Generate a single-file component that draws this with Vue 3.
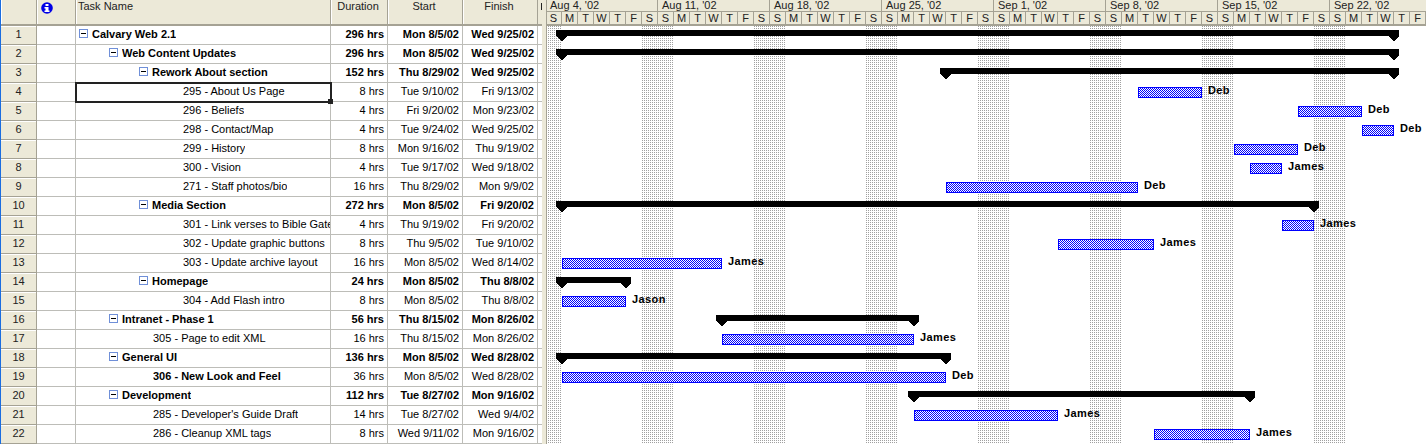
<script setup>
const tasks = [
  { id: 1, name: 'Calvary Web 2.1', level: 0, group: true, dur: '296 hrs', start: 'Mon 8/5/02', finish: 'Wed 9/25/02', from: 562, to: 1394 },
  { id: 2, name: 'Web Content Updates', level: 1, group: true, dur: '296 hrs', start: 'Mon 8/5/02', finish: 'Wed 9/25/02', from: 562, to: 1394 },
  { id: 3, name: 'Rework About section', level: 2, group: true, dur: '152 hrs', start: 'Thu 8/29/02', finish: 'Wed 9/25/02', from: 946, to: 1394 },
  { id: 4, name: '295 - About Us Page', level: 3, dur: '8 hrs', start: 'Tue 9/10/02', finish: 'Fri 9/13/02', from: 1138, to: 1202, who: 'Deb', selected: true },
  { id: 5, name: '296 - Beliefs', level: 3, dur: '4 hrs', start: 'Fri 9/20/02', finish: 'Mon 9/23/02', from: 1298, to: 1362, who: 'Deb' },
  { id: 6, name: '298 - Contact/Map', level: 3, dur: '4 hrs', start: 'Tue 9/24/02', finish: 'Wed 9/25/02', from: 1362, to: 1394, who: 'Deb' },
  { id: 7, name: '299 - History', level: 3, dur: '8 hrs', start: 'Mon 9/16/02', finish: 'Thu 9/19/02', from: 1234, to: 1298, who: 'Deb' },
  { id: 8, name: '300 - Vision', level: 3, dur: '4 hrs', start: 'Tue 9/17/02', finish: 'Wed 9/18/02', from: 1250, to: 1282, who: 'James' },
  { id: 9, name: '271 - Staff photos/bio', level: 3, dur: '16 hrs', start: 'Thu 8/29/02', finish: 'Mon 9/9/02', from: 946, to: 1138, who: 'Deb' },
  { id: 10, name: 'Media Section', level: 2, group: true, dur: '272 hrs', start: 'Mon 8/5/02', finish: 'Fri 9/20/02', from: 562, to: 1314 },
  { id: 11, name: '301 - Link verses to Bible Gate', level: 3, dur: '4 hrs', start: 'Thu 9/19/02', finish: 'Fri 9/20/02', from: 1282, to: 1314, who: 'James' },
  { id: 12, name: '302 - Update graphic buttons', level: 3, dur: '8 hrs', start: 'Thu 9/5/02', finish: 'Tue 9/10/02', from: 1058, to: 1154, who: 'James' },
  { id: 13, name: '303 - Update archive layout', level: 3, dur: '16 hrs', start: 'Mon 8/5/02', finish: 'Wed 8/14/02', from: 562, to: 722, who: 'James' },
  { id: 14, name: 'Homepage', level: 2, group: true, dur: '24 hrs', start: 'Mon 8/5/02', finish: 'Thu 8/8/02', from: 562, to: 626 },
  { id: 15, name: '304 - Add Flash intro', level: 3, dur: '8 hrs', start: 'Mon 8/5/02', finish: 'Thu 8/8/02', from: 562, to: 626, who: 'Jason' },
  { id: 16, name: 'Intranet - Phase 1', level: 1, group: true, dur: '56 hrs', start: 'Thu 8/15/02', finish: 'Mon 8/26/02', from: 722, to: 914 },
  { id: 17, name: '305 - Page to edit XML', level: 2, dur: '16 hrs', start: 'Thu 8/15/02', finish: 'Mon 8/26/02', from: 722, to: 914, who: 'James' },
  { id: 18, name: 'General UI', level: 1, group: true, dur: '136 hrs', start: 'Mon 8/5/02', finish: 'Wed 8/28/02', from: 562, to: 946 },
  { id: 19, name: '306 - New Look and Feel', level: 2, bold: true, dur: '36 hrs', start: 'Mon 8/5/02', finish: 'Wed 8/28/02', from: 562, to: 946, who: 'Deb' },
  { id: 20, name: 'Development', level: 1, group: true, dur: '112 hrs', start: 'Tue 8/27/02', finish: 'Mon 9/16/02', from: 914, to: 1250 },
  { id: 21, name: "285 - Developer's Guide Draft", level: 2, dur: '14 hrs', start: 'Tue 8/27/02', finish: 'Wed 9/4/02', from: 914, to: 1058, who: 'James' },
  { id: 22, name: '286 - Cleanup XML tags', level: 2, dur: '8 hrs', start: 'Wed 9/11/02', finish: 'Mon 9/16/02', from: 1154, to: 1250, who: 'James' }
]

const weeks = ['Aug 4, \'02', 'Aug 11, \'02', 'Aug 18, \'02', 'Aug 25, \'02', 'Sep 1, \'02', 'Sep 8, \'02', 'Sep 15, \'02', 'Sep 22, \'02']
const letters = ['S', 'M', 'T', 'W', 'T', 'F', 'S']
const days = []
for (let i = 0; i < 55; i++) days.push(letters[i % 7])

const chartLeft = 546
const rowH = 19

// saturday + sunday bands, the first one is only the sunday
const weekends = [{ x: 1, w: 15 }]
const weekLines = []
for (let w = 1; w <= 8; w++) {
  weekends.push({ x: w * 112 - 17, w: 33 })
  weekLines.push(w * 112 - 1)
}

function sumPath(t, i) {
  const y = i * rowH + 4
  const a = t.from - chartLeft
  const b = t.to - chartLeft
  return `M${a - 6} ${y}H${b + 5}V${y + 6}L${b} ${y + 11}L${b - 6} ${y + 6}H${a + 6}L${a} ${y + 11}L${a - 6} ${y + 6}Z`
}

function labelStyle(t, i) {
  return { left: t.to - chartLeft + 6 + 'px', top: i * rowH + 'px' }
}
</script>

<template>
  <div class="plan">
    <div class="sheet">
      <div class="head">
        <div class="cell num"></div>
        <div class="cell ind">
          <svg width="12" height="12" viewBox="0 0 12 12">
            <circle cx="6" cy="6" r="5.8" fill="#0000e6" />
            <rect x="4.5" y="2" width="3" height="2" fill="#fff" />
            <path d="M3.5 5H7.5V8.5H8.5V10H3.5V8.5H4.5V6.5H3.5Z" fill="#fff" />
          </svg>
        </div>
        <div class="cell name">Task Name</div>
        <div class="cell dur">Duration</div>
        <div class="cell date">Start</div>
        <div class="cell date">Finish</div>
        <div class="cell fill"></div>
      </div>
      <div v-for="t in tasks" :key="t.id" class="row" :class="{ strong: t.group }">
        <div class="cell num">{{ t.id }}</div>
        <div class="cell ind"></div>
        <div class="cell name" :class="['lv' + t.level, { sel: t.selected, leaf: !t.group, strong: t.bold }]">
          <span v-if="t.group" class="tog"></span>
          <span class="label">{{ t.name }}</span>
        </div>
        <div class="cell dur">{{ t.dur }}</div>
        <div class="cell date">{{ t.start }}</div>
        <div class="cell date">{{ t.finish }}</div>
        <div class="cell fill"></div>
      </div>
    </div>

    <div class="split"></div>

    <div class="gantt">
      <div class="scale">
        <div class="weeks">
          <div v-for="w in weeks" :key="w" class="week">{{ w }}</div>
        </div>
        <div class="days">
          <div v-for="(d, i) in days" :key="i" class="day">{{ d }}</div>
        </div>
      </div>
      <div class="canvas">
        <svg class="bars" width="880" height="418" shape-rendering="crispEdges">
          <defs>
            <pattern id="stipple" width="4" height="4" patternUnits="userSpaceOnUse">
              <rect width="1" height="1" fill="#a0a0a0" />
              <rect x="2" y="2" width="1" height="1" fill="#a0a0a0" />
              <rect x="2" width="1" height="1" fill="#a0a0a0" />
              <rect y="2" width="1" height="1" fill="#a0a0a0" />
            </pattern>
            <pattern id="dense" width="2" height="2" patternUnits="userSpaceOnUse">
              <rect width="1" height="1" fill="#808080" />
            </pattern>
            <pattern id="hatch" width="2" height="2" patternUnits="userSpaceOnUse">
              <rect width="2" height="2" fill="#fff" />
              <rect width="1" height="1" fill="#0000ff" />
              <rect x="1" y="1" width="1" height="1" fill="#0000ff" />
            </pattern>
          </defs>
          <rect v-for="(b, i) in weekends" :key="i" :x="b.x" y="0" :width="b.w" height="418" fill="url(#stipple)" />
          <rect v-for="x in weekLines" :key="x" :x="x" y="0" width="1" height="418" fill="url(#dense)" />
          <template v-for="(t, i) in tasks" :key="t.id">
            <path v-if="t.group" :d="sumPath(t, i)" fill="#000" />
            <rect
              v-else
              :x="t.from - chartLeft + 0.5"
              :y="i * rowH + 4.5"
              :width="t.to - t.from - 1"
              height="10"
              fill="url(#hatch)"
              stroke="#0000ff"
            />
          </template>
        </svg>
        <template v-for="(t, i) in tasks" :key="t.id">
          <div v-if="t.who" class="who" :style="labelStyle(t, i)">{{ t.who }}</div>
        </template>
      </div>
    </div>
  </div>
</template>

<style scoped>
.plan {
  display: flex;
  width: 1426px;
  height: 444px;
  overflow: hidden;
  background: #fff;
  font-family: "Liberation Sans", Arial, sans-serif;
  font-size: 11px;
  color: #000;
  border-left: 1px solid #1a6de0;
  box-sizing: border-box;
}

.sheet {
  width: 541px;
  flex: none;
}

.head {
  display: flex;
  height: 26px;
  background: #ece9d8;
  color: #222;
}

.row {
  display: flex;
  height: 19px;
}

.cell {
  box-sizing: border-box;
  flex: none;
  height: 100%;
  border-right: 1px solid #bdbdb8;
  border-bottom: 1px solid #bdbdb8;
  line-height: 16px;
  white-space: nowrap;
  overflow: hidden;
}

.head .cell {
  border-color: #a5a294;
  border-bottom-width: 2px;
  line-height: 12px;
  text-align: center;
  box-shadow: inset 1px 0 0 #fff;
}

.num {
  width: 36px;
  text-align: center;
  font-weight: normal;
  background: #ece9d8;
  color: #222;
  border-right-color: #a5a294;
  border-bottom-color: #a5a294;
  box-shadow: inset 0 1px 0 #fff;
}

.ind {
  width: 39px;
}

.head .ind {
  text-align: left;
  padding: 2px 0 0 4px;
}

.name {
  width: 255px;
  display: flex;
  align-items: flex-start;
}

.label {
  min-width: 0;
  overflow: hidden;
}

.head .name {
  display: block;
  text-align: left;
  padding-left: 2px;
}

.dur {
  width: 57px;
  text-align: right;
  padding-right: 3px;
}

.date {
  width: 75px;
  text-align: right;
  padding-right: 3px;
}

.head .dur,
.head .date {
  padding-right: 2px;
}

.fill {
  flex: 1;
  border-right: 0;
}

.head .fill {
  position: relative;
  border-right: 0;
  box-shadow: none;
}

.head .fill::after {
  content: "";
  position: absolute;
  left: 3px;
  top: 3px;
  width: 1px;
  height: 7px;
  background: #222;
}

.strong {
  font-weight: bold;
}

.lv0 { padding-left: 3px; }
.lv1 { padding-left: 33px; }
.lv2 { padding-left: 63px; }
.lv3 { padding-left: 107px; }
.lv2.leaf { padding-left: 77px; }

.tog {
  position: relative;
  box-sizing: border-box;
  flex: none;
  width: 9px;
  height: 9px;
  margin: 3px 4px 0 0;
  border: 1px solid #6f8fd8;
}

.tog::after {
  content: "";
  position: absolute;
  left: 1px;
  top: 3px;
  width: 5px;
  height: 1px;
  background: #000;
}

.sel {
  position: relative;
  overflow: visible;
  outline: 2px solid #222;
  outline-offset: -1px;
  z-index: 1;
}

.sel::after {
  content: "";
  position: absolute;
  right: -3px;
  bottom: -3px;
  width: 5px;
  height: 5px;
  background: #222;
}

.split {
  flex: none;
  width: 4px;
  background: #ece9d8;
}

.gantt {
  flex: 1;
  min-width: 0;
  overflow: hidden;
}

.scale {
  height: 26px;
  background: #ece9d8;
  border-bottom: 2px solid #a5a294;
  box-sizing: border-box;
  box-shadow: inset 1px 0 0 #a5a294;
}

.weeks,
.days {
  display: flex;
  height: 12px;
}

.week {
  box-sizing: border-box;
  flex: none;
  width: 112px;
  padding-left: 4px;
  line-height: 11px;
  color: #222;
  border-right: 1px solid #a5a294;
  border-bottom: 1px solid #a5a294;
  white-space: nowrap;
}

.day {
  box-sizing: border-box;
  flex: none;
  width: 16px;
  text-align: center;
  line-height: 13px;
  color: #222;
  border-right: 1px solid #a5a294;
}

.canvas {
  position: relative;
  height: 418px;
  box-shadow: inset 1px 0 0 #a5a294;
}

.bars {
  display: block;
}

.who {
  position: absolute;
  line-height: 15px;
  font-weight: bold;
  letter-spacing: 0.4px;
  white-space: nowrap;
}
</style>

<style>
html,
body {
  margin: 0;
  background: #fff;
}
</style>
